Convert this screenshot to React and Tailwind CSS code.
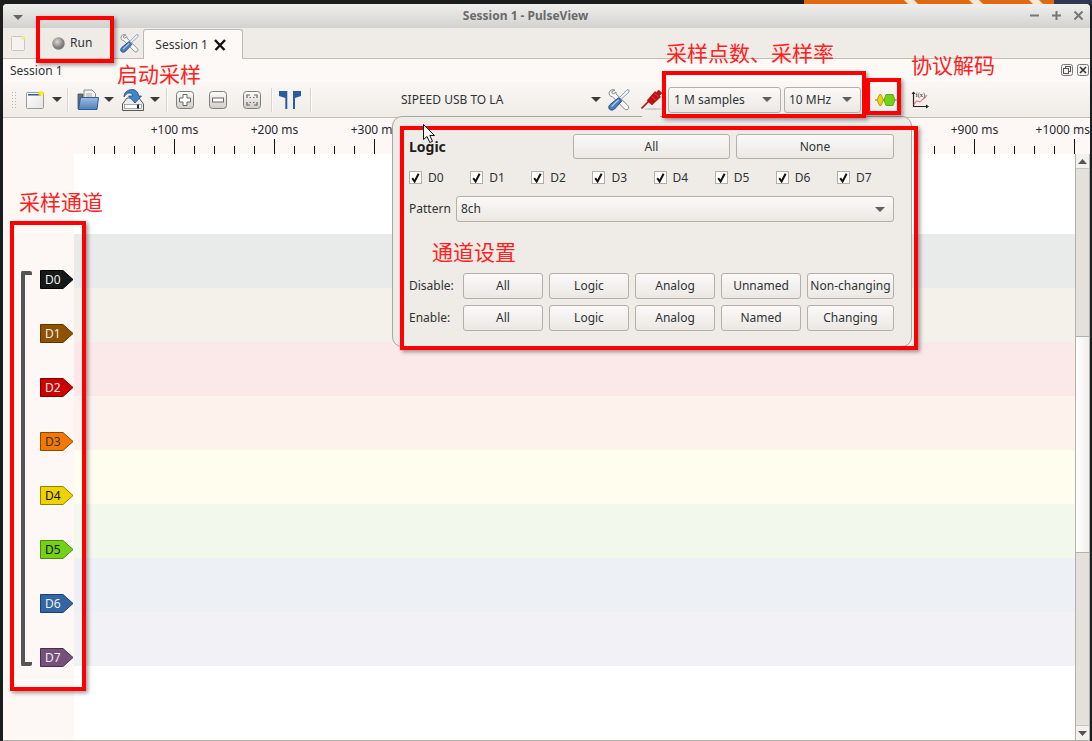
import React from "react";

const Tri = ({ className = "" }) => (
  <svg width="10" height="5" viewBox="0 0 10 5" className={`shrink-0 ${className}`}><path d="M0 0H10L5 5Z" fill="#3a3a3a" /></svg>
);
const ComboTri = () => (
  <svg width="10" height="5" viewBox="0 0 10 5" className="shrink-0"><path d="M0 0H10L5 5Z" fill="#5f5f5f" /></svg>
);
const Sep = ({ className = "" }) => <div className={`w-[2px] h-[24px] shrink-0 border-l border-[#d8d4cf] bg-[#fdfbf9] ${className}`} />;

const Tools = ({ className = "", s = 22 }) => (
  <svg width={s} height={s} viewBox="0 0 22 22" className={`shrink-0 ${className}`}>
    <path d="M7 1.2 C4.5 0 1.8 1 1.2 3.5 C0.8 5.5 2 7.5 4.5 7.8 L16.5 20 C17.8 21.2 20 20.8 20.6 19.5 C21 18.2 20.6 17.2 19.5 16.2 L8 4.8 L8 3 L5.5 4.8 L3.8 3.8 L4.2 2.2 Z" fill="#f6f6f4" stroke="#7f8588" strokeWidth="1" strokeLinejoin="round" />
    <path d="M21 1 L19 0.8 L11.5 8.5 L13.2 10.2 L21 3 Z" fill="#eef2f5" stroke="#6b8caf" strokeWidth="0.8" />
    <path d="M10.5 8.8 L13.8 12 L6.5 20 C4.8 21.5 2.6 21.4 1.5 20.2 C0.4 19 0.6 17 2 15.6 Z" fill="#4a7fbb" stroke="#204a87" strokeWidth="1" />
    <path d="M3.5 17.5 L10.5 10.8" stroke="#b5d0ec" strokeWidth="1.2" />
  </svg>
);
const NewIcon = () => (
  <svg width="20" height="19" viewBox="0 0 20 19" className="shrink-0">
    <defs>
      <radialGradient id="yg"><stop offset="0.35" stopColor="#fff200" /><stop offset="1" stopColor="#fff200" stopOpacity="0" /></radialGradient>
      <linearGradient id="pg" x1="0" y1="0" x2="1" y2="1"><stop offset="0" stopColor="#fff" /><stop offset="1" stopColor="#e2e4e2" /></linearGradient>
    </defs>
    <rect x="0.5" y="2.5" width="17" height="16" rx="1" fill="url(#pg)" stroke="#9a9c98" />
    <rect x="2" y="4" width="13" height="1.5" fill="#2f5b96" />
    <circle cx="15" cy="3.5" r="3.5" fill="url(#yg)" />
  </svg>
);
const OpenIcon = () => (
  <svg width="22" height="21" viewBox="0 0 22 21" className="shrink-0">
    <defs><linearGradient id="fg" x1="0" y1="0" x2="0" y2="1"><stop offset="0" stopColor="#9dbce0" /><stop offset="1" stopColor="#4f7fb8" /></linearGradient></defs>
    <path d="M1 5 H6 V20 H1 Z" fill="#5c6f85" stroke="#444f5c" strokeWidth="0.8" />
    <path d="M7 1H15L18.5 4.5V10H7Z" fill="#f2f2f0" stroke="#8b8d8a" />
    <path d="M9 5H15M9 7H15" stroke="#a8a8a6" />
    <path d="M3.5 8.5H21.5L20 20.5H1.5Z" fill="url(#fg)" stroke="#2f5b96" />
  </svg>
);
const SaveIcon = () => (
  <svg width="22" height="22" viewBox="0 0 22 22" className="shrink-0">
    <path d="M5 9H17L21.5 15V21.5H0.5V15Z" fill="#eeeeec" stroke="#555753" />
    <rect x="2.5" y="15.5" width="17" height="4" fill="#fdfdfc" stroke="#777" strokeWidth="0.6" />
    <rect x="15" y="15.5" width="2" height="4" fill="#222" />
    <path d="M2 8 C2 2 8 0 11 0.6 C15 1.2 16.5 4.5 16.5 7 L19.5 7 L13 14 L6.5 7 L10.5 7 C10.5 5 9 4 7 4 C5 4 3.5 6 2 8Z" fill="#3f86c8" stroke="#204a87" strokeWidth="0.8" />
  </svg>
);
const ZoomBtn = ({ children, className = "" }) => (
  <svg width="18" height="18" viewBox="0 0 18 18" className={`shrink-0 ${className}`}>
    <defs><linearGradient id="zg" x1="0" y1="0" x2="0" y2="1"><stop offset="0" stopColor="#fdfdfc" /><stop offset="1" stopColor="#cfcdc9" /></linearGradient></defs>
    <rect x="0.5" y="0.5" width="17" height="17" rx="3" fill="url(#zg)" stroke="#7f7f7c" />
    {children}
  </svg>
);
const Cursors = () => (
  <svg width="22" height="18" viewBox="0 0 22 18" className="shrink-0">
    <path d="M0 0H8.3V18H6.3V7L0 5Z" fill="#2a5ca3" />
    <path d="M22 0H14V18H16V7L22 5Z" fill="#2a5ca3" />
  </svg>
);
const Probe = () => (
  <svg width="22" height="22" viewBox="0 0 22 22" className="shrink-0">
    <ellipse cx="12" cy="20" rx="9" ry="1.2" fill="#d3cfca" />
    <path d="M0.5 19.5 L8 12" stroke="#b01212" strokeWidth="1.6" />
    <path d="M6 11.5 L14 2.5 L15.5 3.5 L17.5 1 L21 4 L18.5 6.5 L19.5 8 L11 16 Z" fill="#c40f0f" stroke="#8a0f0f" strokeWidth="0.5" />
    <path d="M11 7.5 L14.5 11 M14 4.5 L17.5 8" stroke="#e06a6a" strokeWidth="0.7" />
  </svg>
);
const Decode = () => (
  <svg width="22" height="14" viewBox="0 0 22 14" className="shrink-0">
    <path d="M0 7H22" stroke="#6e7a6a" strokeWidth="1" />
    <path d="M2 7 L4.5 1.5 L6 1.5 L8.5 7 L6 12.5 L4.5 12.5 Z" fill="#edd400" stroke="#a08f00" strokeWidth="0.8" />
    <path d="M9 7 L11 1.5 H18 L20 7 L18 12.5 H11 Z" fill="#73d216" stroke="#4e9a06" strokeWidth="0.8" />
  </svg>
);
const MathIcon = () => (
  <svg width="18" height="18" viewBox="0 0 18 18" className="shrink-0">
    <path d="M2.5 1V15.5H17" stroke="#222" strokeWidth="1.2" fill="none" />
    <path d="M0.5 3L2.5 0.5L4.5 3Z M15 13.5L18 15.5L15 17.5Z" fill="#222" />
    <path d="M3 14C6 6 8 13 10 10C12 7 13 9 16 4" stroke="#ef7a7a" strokeWidth="1.2" fill="none" />
    <text x="4.5" y="5.5" fontSize="6.5" fill="#222" fontFamily="Liberation Serif, serif">f(x)</text>
  </svg>
);

const Btn = ({ children, className = "" }) => (
  <div className={`flex items-center justify-center shrink-0 rounded-[3px] border border-[#b3afa9] bg-linear-to-b from-[#fbfaf9] to-[#ebe8e4] text-[12px] text-[#2e3436] ${className}`}>{children}</div>
);
const Combo = ({ label, className = "" }) => (
  <div className={`flex items-center justify-between shrink-0 rounded-[3px] border border-[#b3afa9] bg-linear-to-b from-[#fbfaf9] to-[#ebe8e4] text-[12px] text-[#2e3436] pl-[4px] pr-[8px] ${className}`}>
    <span>{label}</span><ComboTri />
  </div>
);
const Check = ({ label }) => (
  <div className="flex items-center w-[61.14px] shrink-0">
    <div className="w-[13px] h-[13px] bg-white border border-[#b3afa9] flex items-center justify-center">
      <svg width="9" height="10" viewBox="0 0 9 10"><path d="M1.2 5.2L3.6 8.5L7.6 0.8" stroke="#111" strokeWidth="2" fill="none" /></svg>
    </div>
    <span className="ml-[6px] text-[12px] text-[#2e3436]">{label}</span>
  </div>
);

const tags = [
  ["D0", "#16191a", "#000", "#eeeeec"],
  ["D1", "#8f5202", "#5c3501", "#eeeeec"],
  ["D2", "#cc0000", "#800000", "#eeeeec"],
  ["D3", "#f57900", "#8f4700", "#2e3436"],
  ["D4", "#edd400", "#8f8000", "#111"],
  ["D5", "#73d216", "#4e8a06", "#111"],
  ["D6", "#3465a4", "#1c3f70", "#eeeeec"],
  ["D7", "#75507b", "#45304a", "#eeeeec"],
];
const rowColors = ["bg-[#e9eaea]", "bg-[#f4f1ea]", "bg-[#fbe9e9]", "bg-[#fef3ec]", "bg-[#fffeee]", "bg-[#f2f8ec]", "bg-[#edf1f6]", "bg-[#f2f1f5]"];

const Tag = ([name, fill, stroke, fg]) => (
  <div key={name} className="h-[54px] pt-[18px]">
    <div className="relative w-[34px] h-[19px]">
      <svg width="34" height="19" viewBox="0 0 34 19" className="absolute inset-0">
        <path d="M0.5 0.5H23L33 9.5L23 18.5H0.5Z" fill={fill} stroke={stroke} />
      </svg>
      <span className="absolute left-[5px] top-0 leading-[19px] text-[12px]" style={{ color: fg }}>{name}</span>
    </div>
  </div>
);

const Ruler = () => {
  const ticks = [];
  for (let i = 0; i < 50; i++) {
    const x = 91.5 + 20 * i;
    const major = (i - 4) % 5 === 0;
    ticks.push(<line key={i} x1={x} x2={x} y1={major ? 21 : 28} y2={36} stroke="#111" strokeWidth="1" />);
  }
  const labels = [1, 2, 3, 4, 5, 6, 7, 8, 9];
  return (
    <div className="relative h-[36px] bg-[#fdf8f5] shrink-0">
      <svg width="1087" height="36" className="absolute inset-0">{ticks}</svg>
      {labels.map((n) => (
        <span key={n} className="absolute top-[3px] text-[12px] text-[#1e2a33] -translate-x-1/2 whitespace-nowrap" style={{ left: 71.5 + 100 * n }}>+{n}00 ms</span>
      ))}
      <span className="absolute top-[3px] right-[0px] text-[12px] text-[#1e2a33] whitespace-nowrap">+1000 ms</span>
    </div>
  );
};

const Note = ({ children, className }) => (
  <div className={`absolute text-[21px] leading-[24px] text-[#ff2222] whitespace-nowrap ${className}`} style={{ fontFamily: '"Noto Sans CJK SC", sans-serif' }}>{children}</div>
);
const Box = ({ className }) => <div className={`absolute border-[4px] border-[#ff0000] shadow-[2px_2px_4px_rgba(0,0,0,0.4)] ${className}`} />;

export default function App() {
  return (
    <div className="relative w-[1092px] h-[741px] overflow-hidden bg-[#1b1d1f] text-[12px]" style={{ fontFamily: '"Noto Sans", sans-serif' }}>
      <div className="h-[4px] flex">
        <div className="w-[804px] bg-[#1b1d1f]" />
        <svg width="250" height="4" className="shrink-0">
          <rect width="250" height="4" fill="#e2690f" />
          <path d="M100 0H110L114 4H104ZM165 0H175L179 4H169ZM225 0H235L239 4H229Z" fill="#f6e6d6" />
        </svg>
        <div className="flex-1 bg-[#2e3a52]" />
      </div>
      <div className="ml-[3px] w-[1087px] h-[737px] flex flex-col bg-[#efebe7] rounded-t-[4px] overflow-hidden">
        {/* title bar */}
        <div className="relative h-[24px] shrink-0 flex items-center justify-center bg-linear-to-b from-[#efefed] to-[#d3d2d0]">
          <svg width="10" height="5" viewBox="0 0 10 5" className="absolute left-[10px] top-[11px]"><path d="M0 0H10L5 5Z" fill="#666" /></svg>
          <span className="font-bold text-[12px] text-[#6a6a6a] ml-[-42px]">Session 1 - PulseView</span>
          <div className="absolute right-[6px] top-[6px] flex gap-[11px] items-center">
            <svg width="11" height="11" viewBox="0 0 11 11"><path d="M1 5.5H10" stroke="#777" strokeWidth="2" /></svg>
            <svg width="11" height="11" viewBox="0 0 11 11"><path d="M1 5.5H10M5.5 1V10" stroke="#777" strokeWidth="2" /></svg>
            <svg width="11" height="11" viewBox="0 0 11 11"><path d="M1.5 1.5L9.5 9.5M9.5 1.5L1.5 9.5" stroke="#777" strokeWidth="2" /></svg>
          </div>
        </div>
        {/* tab bar */}
        <div className="h-[30px] shrink-0 flex items-end bg-[#efebe7] relative">
          <div className="flex items-center h-[30px]">
            <svg width="15" height="15" viewBox="0 0 15 15" className="ml-[8px] shrink-0">
              <rect x="0.5" y="0.5" width="13" height="14" rx="1" fill="#f4f3ef" stroke="#c8c6c2" />
              <circle cx="12" cy="2" r="2" fill="#f5ee8a" />
            </svg>
            <svg width="13" height="13" viewBox="0 0 13 13" className="ml-[26px] shrink-0">
              <defs><radialGradient id="rg" cx="0.4" cy="0.35"><stop offset="0" stopColor="#d8d8d6" /><stop offset="1" stopColor="#7c7c7a" /></radialGradient></defs>
              <circle cx="6.5" cy="6.5" r="6.2" fill="url(#rg)" />
            </svg>
            <span className="ml-[5px] text-[12px] text-[#2e3436]">Run</span>
            <div className="ml-[18px] w-[1px] h-[22px] bg-[#b3afa9]" />
            <Tools className="ml-[9px]" s={19} />
          </div>
          <div className="ml-[4px] w-[100px] h-[30px] bg-[#fcf9f6] border border-b-0 border-[#bdb9b4] rounded-t-[3px] flex items-center pl-[11px] relative z-10 mb-[-1px]">
            <span className="text-[12px] text-[#2e3436]">Session 1</span>
            <svg width="12" height="12" viewBox="0 0 12 12" className="ml-[6px]"><path d="M1 1L10.5 11M11 1L1.5 11" stroke="#111" strokeWidth="2.4" /></svg>
          </div>
        </div>
        {/* session panel */}
        <div className="flex-1 min-h-0 flex flex-col border-t border-[#c2beb9]">
          <div className="relative h-[23px] shrink-0 bg-[#fcf9f6] flex items-center pl-[7px]">
            <span className="text-[12px] text-[#2e3436]">Session 1</span>
            <div className="absolute right-[1px] top-[5px] flex gap-[4px]">
              <svg width="12" height="12" viewBox="0 0 12 12"><rect x="0.5" y="0.5" width="11" height="11" rx="2" fill="#f6f4f1" stroke="#777" /><rect x="4.5" y="2.5" width="5" height="5" fill="none" stroke="#555" /><rect x="2.5" y="4.5" width="5" height="5" fill="#f6f4f1" stroke="#555" /></svg>
              <svg width="12" height="12" viewBox="0 0 12 12"><rect x="0.5" y="0.5" width="11" height="11" rx="2" fill="#f6f4f1" stroke="#777" /><path d="M3 3L9 9M9 3L3 9" stroke="#333" strokeWidth="1.6" /></svg>
            </div>
          </div>
          {/* toolbar */}
          <div className="h-[35px] shrink-0 flex items-center bg-linear-to-b from-[#fbf7f4] to-[#efebe7] border-b-0">
            <div className="ml-[8px] w-[5px] h-[18px] shrink-0 bg-[radial-gradient(#b8b5b0_1px,transparent_1px)] bg-[length:3px_3px]" />
            <div className="ml-[10px]"><NewIcon /></div>
            <Tri className="ml-[6px]" />
            <Sep className="ml-[5px]" />
            <div className="ml-[8px]"><OpenIcon /></div>
            <Tri className="ml-[5px]" />
            <div className="ml-[8px]"><SaveIcon /></div>
            <Tri className="ml-[6px]" />
            <Sep className="ml-[6px]" />
            <ZoomBtn className="ml-[8px]"><path d="M7 3.5H11V7H14.5V11H11V14.5H7V11H3.5V7H7Z" fill="#fff" stroke="#666" /></ZoomBtn>
            <ZoomBtn className="ml-[15px]"><rect x="3.5" y="7" width="11" height="4" fill="#fff" stroke="#666" /></ZoomBtn>
            <ZoomBtn className="ml-[16px]"><path d="M7 4H4V7M11 4H14V7M7 14H4V11M11 14H14V11M6.5 6.5H8M10 6.5H11.5M6.5 11.5H8M10 11.5H11.5" stroke="#666" fill="none" strokeWidth="1.2" /></ZoomBtn>
            <Sep className="ml-[10px]" />
            <div className="ml-[6px]"><Cursors /></div>
            <Sep className="ml-[9px]" />
            <span className="ml-[89px] w-[190px] shrink-0 text-[12px] text-[#2e3436]">SIPEED USB TO LA</span>
            <Tri />
            <Tools className="ml-[7px]" />
            <div className="ml-[11px]"><Probe /></div>
            <Combo label="1 M samples" className="ml-[5px] w-[113px] h-[26px] pl-[5px]" />
            <Combo label="10 MHz" className="ml-[3px] w-[77px] h-[26px]" />
            <div className="ml-[14px]"><Decode /></div>
            <div className="ml-[14px]"><MathIcon /></div>
          </div>
          <div className="h-[1px] shrink-0 bg-[#c2beb9]" />
          <Ruler />
          {/* body */}
          <div className="flex-1 min-h-0 flex border-b border-[#b3afa9]">
            <div className="w-[71px] shrink-0 bg-[#fdf8f5] flex">
              <div className="ml-[18px] mt-[117px] w-[11px] h-[395px] shrink-0 border-[4px] border-r-0 border-[#555] rounded-[2px]" />
              <div className="ml-[8px] mt-[98px] flex flex-col">{tags.map(Tag)}</div>
            </div>
            <div className="flex-1 bg-white pt-[80px]">
              {rowColors.map((c) => <div key={c} className={`h-[54px] ${c}`} />)}
            </div>
            <div className="w-[15px] shrink-0 flex flex-col bg-[#e4e1dd] border-x border-[#b3afa9]">
              <div className="h-[15px] shrink-0 flex items-center justify-center bg-[#f3f1ee] border-b border-[#c8c4bf]">
                <svg width="9" height="5" viewBox="0 0 9 5"><path d="M0 5H9L4.5 0Z" fill="#555" /></svg>
              </div>
              <div className="h-[167px] shrink-0" />
              <div className="h-[217px] shrink-0 bg-linear-to-r from-[#ffffff] to-[#f1efec] border-y border-[#b3afa9]" />
              <div className="flex-1" />
              <div className="h-[15px] shrink-0 flex items-center justify-center bg-[#f3f1ee] border-t border-[#c8c4bf]">
                <svg width="9" height="5" viewBox="0 0 9 5"><path d="M0 0H9L4.5 5Z" fill="#555" /></svg>
              </div>
            </div>
          </div>
        </div>
      </div>

      {/* popup */}
      <div className="absolute left-[392px] top-[116px] w-[520px] h-[231px] rounded-[10px] border border-[#a9a5a0] bg-[#efebe7] pl-[16px] pr-[17px] pt-[17px]">
        <div className="absolute left-[249px] top-[-2px] w-[18px] h-[3px] bg-[#efebe7]" />
        <div className="flex items-center h-[25px]">
          <span className="font-bold text-[14px] text-[#1c1c1c]">Logic</span>
          <div className="ml-auto flex gap-[6px]">
            <Btn className="w-[157px] h-[25px]">All</Btn>
            <Btn className="w-[158px] h-[25px]">None</Btn>
          </div>
        </div>
        <div className="mt-[12px] h-[13px] flex items-center">
          {["D0", "D1", "D2", "D3", "D4", "D5", "D6", "D7"].map((d) => <Check key={d} label={d} />)}
        </div>
        <div className="mt-[12px] h-[26px] flex items-center">
          <span className="w-[47px] shrink-0 text-[12px] text-[#2e3436]">Pattern</span>
          <Combo label="8ch" className="flex-1 h-[26px]" />
        </div>
        <div className="mt-[51px] h-[26px] flex items-center">
          <span className="w-[54px] shrink-0 text-[12px] text-[#2e3436]">Disable:</span>
          <div className="flex gap-[6px]">
            <Btn className="w-[80px] h-[26px]">All</Btn>
            <Btn className="w-[80px] h-[26px]">Logic</Btn>
            <Btn className="w-[80px] h-[26px]">Analog</Btn>
            <Btn className="w-[80px] h-[26px]">Unnamed</Btn>
            <Btn className="w-[87px] h-[26px]">Non-changing</Btn>
          </div>
        </div>
        <div className="mt-[6px] h-[26px] flex items-center">
          <span className="w-[54px] shrink-0 text-[12px] text-[#2e3436]">Enable:</span>
          <div className="flex gap-[6px]">
            <Btn className="w-[80px] h-[26px]">All</Btn>
            <Btn className="w-[80px] h-[26px]">Logic</Btn>
            <Btn className="w-[80px] h-[26px]">Analog</Btn>
            <Btn className="w-[80px] h-[26px]">Named</Btn>
            <Btn className="w-[87px] h-[26px]">Changing</Btn>
          </div>
        </div>
      </div>

      {/* annotations */}
      <Box className="left-[36px] top-[16px] w-[78px] h-[47px]" />
      <Box className="left-[662px] top-[71px] w-[204px] h-[47px]" />
      <Box className="left-[866px] top-[78px] w-[35px] h-[37px]" />
      <Box className="left-[400px] top-[126px] w-[518px] h-[224px]" />
      <Box className="left-[10px] top-[221px] w-[76px] h-[470px]" />
      <Note className="left-[117px] top-[61px]">启动采样</Note>
      <Note className="left-[666px] top-[40px]">采样点数、采样率</Note>
      <Note className="left-[911px] top-[52px]">协议解码</Note>
      <Note className="left-[432px] top-[239px]">通道设置</Note>
      <Note className="left-[19px] top-[189px]">采样通道</Note>

      <svg width="14" height="20" viewBox="0 0 14 20" className="absolute left-[423px] top-[124px]">
        <path d="M0.5 0.5V15.5L4 12.5L6.8 18.5L9.5 17.3L6.8 11.5H11.5Z" fill="#fff" stroke="#111" />
      </svg>
    </div>
  );
}
